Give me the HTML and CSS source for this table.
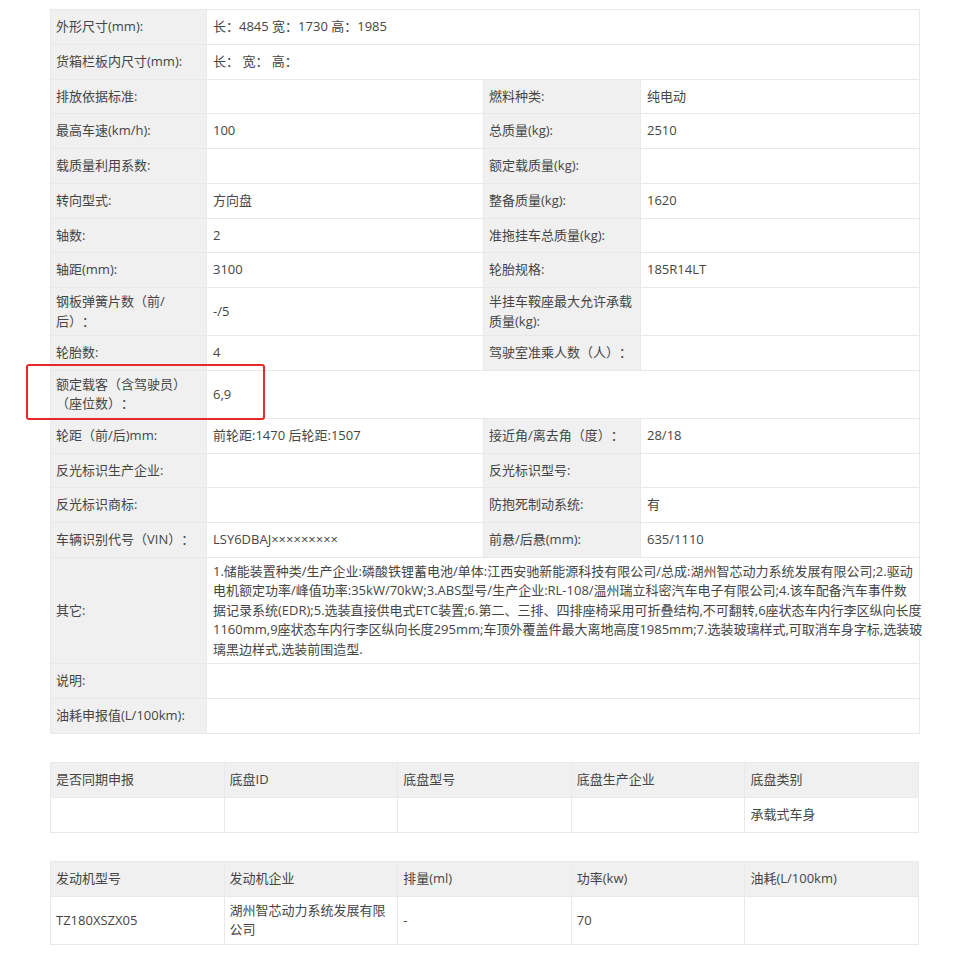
FILE: index.html
```html
<!DOCTYPE html>
<html lang="zh-CN">
<head>
    <meta charset="UTF-8">
    <meta name="viewport" content="width=device-width, initial-scale=1.0">
    <title>车辆参数</title>
    <link rel="stylesheet" href="styles.css">
</head>
<body>
    <div class="page">
        <!-- 主参数表 -->
        <div class="param-wrap">
            <table class="param-table">
                <colgroup>
                    <col class="c-label">
                    <col class="c-value">
                    <col class="c-label2">
                    <col class="c-value2">
                </colgroup>
                <tr>
                    <th>外形尺寸(mm):</th>
                    <td colspan="3">长：4845 宽：1730 高：1985</td>
                </tr>
                <tr>
                    <th>货箱栏板内尺寸(mm):</th>
                    <td colspan="3">长： 宽： 高：</td>
                </tr>
                <tr>
                    <th>排放依据标准:</th>
                    <td></td>
                    <th>燃料种类:</th>
                    <td>纯电动</td>
                </tr>
                <tr>
                    <th>最高车速(km/h):</th>
                    <td>100</td>
                    <th>总质量(kg):</th>
                    <td>2510</td>
                </tr>
                <tr>
                    <th>载质量利用系数:</th>
                    <td></td>
                    <th>额定载质量(kg):</th>
                    <td></td>
                </tr>
                <tr>
                    <th>转向型式:</th>
                    <td>方向盘</td>
                    <th>整备质量(kg):</th>
                    <td>1620</td>
                </tr>
                <tr>
                    <th>轴数:</th>
                    <td>2</td>
                    <th>准拖挂车总质量(kg):</th>
                    <td></td>
                </tr>
                <tr>
                    <th>轴距(mm):</th>
                    <td>3100</td>
                    <th>轮胎规格:</th>
                    <td>185R14LT</td>
                </tr>
                <tr>
                    <th>钢板弹簧片数（前/后）：</th>
                    <td>-/5</td>
                    <th>半挂车鞍座最大允许承载质量(kg):</th>
                    <td></td>
                </tr>
                <tr>
                    <th>轮胎数:</th>
                    <td>4</td>
                    <th>驾驶室准乘人数（人）：</th>
                    <td></td>
                </tr>
                <tr>
                    <th>额定载客（含驾驶员）（座位数）：</th>
                    <td colspan="3">6,9</td>
                </tr>
                <tr>
                    <th>轮距（前/后)mm:</th>
                    <td>前轮距:1470 后轮距:1507</td>
                    <th>接近角/离去角（度）：</th>
                    <td>28/18</td>
                </tr>
                <tr>
                    <th>反光标识生产企业:</th>
                    <td></td>
                    <th>反光标识型号:</th>
                    <td></td>
                </tr>
                <tr>
                    <th>反光标识商标:</th>
                    <td></td>
                    <th>防抱死制动系统:</th>
                    <td>有</td>
                </tr>
                <tr>
                    <th>车辆识别代号（VIN）：</th>
                    <td>LSY6DBAJ×××××××××</td>
                    <th>前悬/后悬(mm):</th>
                    <td>635/1110</td>
                </tr>
                <tr>
                    <th>其它:</th>
                    <td colspan="3" class="long-text">1.储能装置种类/生产企业:磷酸铁锂蓄电池/单体:江西安驰新能源科技有限公司/总成:湖州智芯动力系统发展有限公司;2.驱动<br>电机额定功率/峰值功率:35kW/70kW;3.ABS型号/生产企业:RL-108/温州瑞立科密汽车电子有限公司;4.该车配备汽车事件数<br>据记录系统(EDR);5.选装直接供电式ETC装置;6.第二、三排、四排座椅采用可折叠结构,不可翻转,6座状态车内行李区纵向长度<br>1160mm,9座状态车内行李区纵向长度295mm;车顶外覆盖件最大离地高度1985mm;7.选装玻璃样式,可取消车身字标,选装玻<br>璃黑边样式,选装前围造型.</td>
                </tr>
                <tr>
                    <th>说明:</th>
                    <td colspan="3"></td>
                </tr>
                <tr>
                    <th>油耗申报值(L/100km):</th>
                    <td colspan="3"></td>
                </tr>
            </table>
            <!-- 标注框 -->
            <div class="mark-box"></div>
        </div>

        <!-- 底盘信息 -->
        <table class="list-table">
            <thead>
                <tr>
                    <th>是否同期申报</th>
                    <th>底盘ID</th>
                    <th>底盘型号</th>
                    <th>底盘生产企业</th>
                    <th>底盘类别</th>
                </tr>
            </thead>
            <tbody>
                <tr>
                    <td></td>
                    <td></td>
                    <td></td>
                    <td></td>
                    <td>承载式车身</td>
                </tr>
            </tbody>
        </table>

        <!-- 发动机信息 -->
        <table class="list-table">
            <thead>
                <tr>
                    <th>发动机型号</th>
                    <th>发动机企业</th>
                    <th>排量(ml)</th>
                    <th>功率(kw)</th>
                    <th>油耗(L/100km)</th>
                </tr>
            </thead>
            <tbody>
                <tr>
                    <td>TZ180XSZX05</td>
                    <td>湖州智芯动力系统发展有限公司</td>
                    <td>-</td>
                    <td>70</td>
                    <td></td>
                </tr>
            </tbody>
        </table>
    </div>
</body>
</html>
```

FILE: styles.css
```css
* {
    margin: 0;
    padding: 0;
    box-sizing: border-box;
}

body {
    font-family: "Open Sans", "Noto Sans CJK SC", sans-serif;
    font-size: 13px;
    color: #454545;
    background: #fff;
    text-spacing-trim: space-all;
}

.page {
    width: 869px;
    margin-left: 50px;
    padding-top: 9px;
}

.param-wrap {
    position: relative;
}

table {
    width: 100%;
    border-collapse: collapse;
    table-layout: fixed;
}

th,
td {
    border: 1px solid #e9e9e9;
    padding: 4px 6px;
    line-height: 19.5px;
    text-align: left;
    font-weight: normal;
    vertical-align: middle;
    word-break: break-all;
}

.param-table th {
    background: #f0f0f0;
    padding-left: 5px;
}

.param-table tr {
    height: 34.75px;
}

.c-label {
    width: 156px;
}

.c-value {
    width: 277px;
}

.c-label2 {
    width: 157px;
}

.c-value2 {
    width: 279px;
}

.long-text {
    white-space: nowrap;
}

.mark-box {
    position: absolute;
    left: -24px;
    top: 355px;
    width: 239px;
    height: 56px;
    border: 2px solid #e8282b;
    border-radius: 3px;
}

.list-table {
    margin-top: 28px;
}

.list-table tr {
    height: 35px;
}

.list-table thead th {
    background: #f0f0f0;
    padding-left: 5px;
}

.list-table td {
    padding-left: 5px;
}
```
